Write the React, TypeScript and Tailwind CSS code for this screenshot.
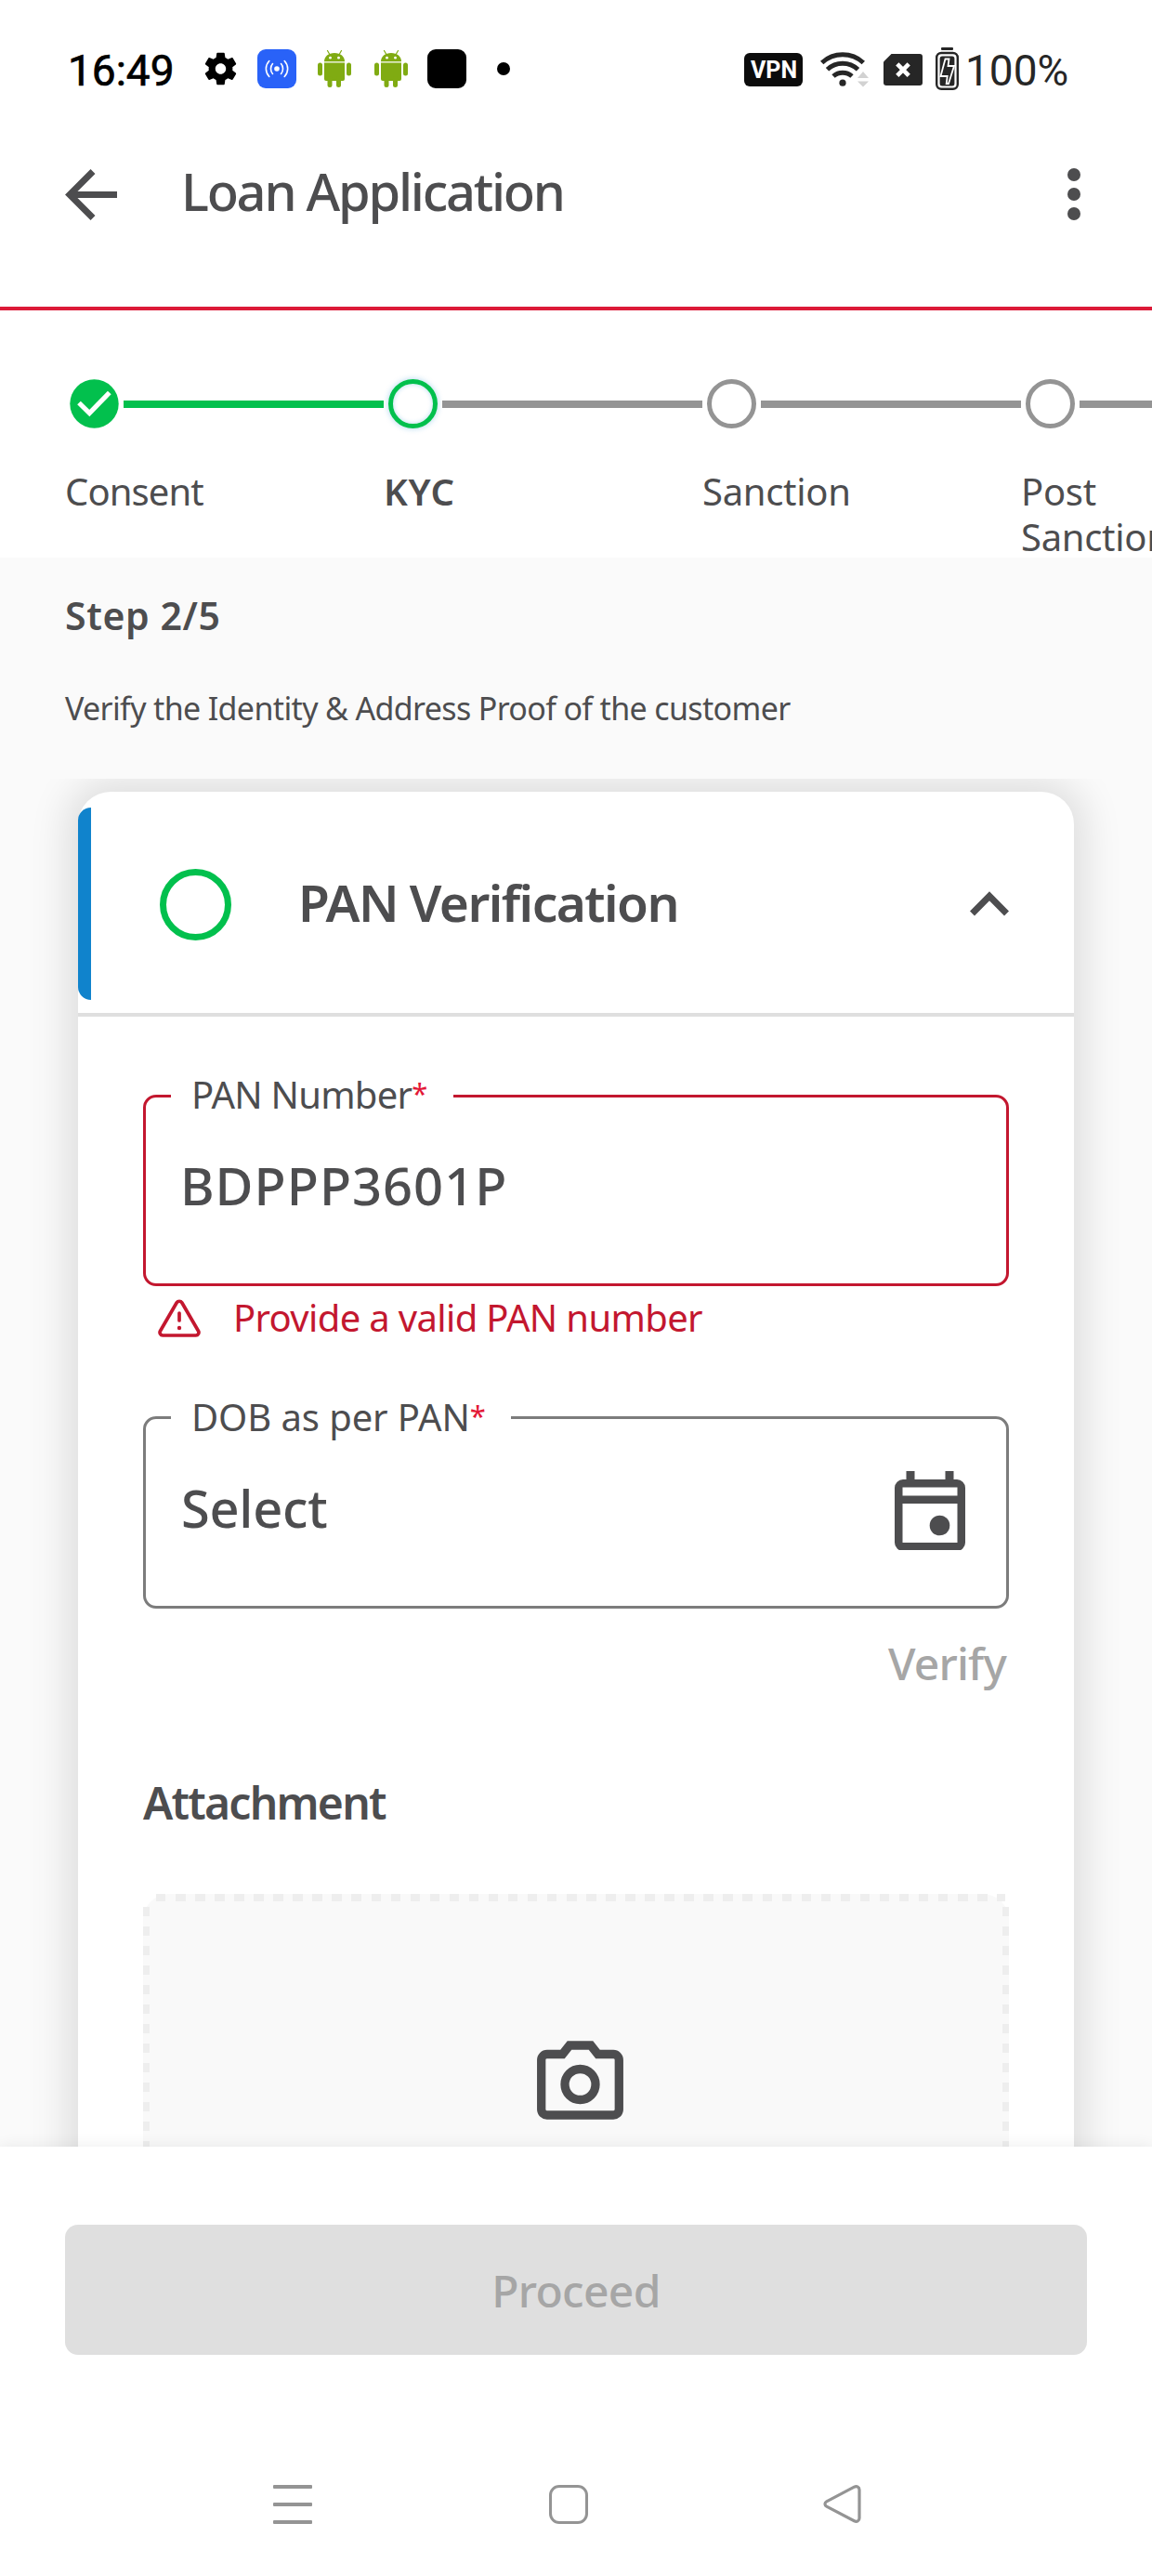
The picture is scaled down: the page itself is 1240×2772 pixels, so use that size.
import type { ReactNode } from "react";

const steps = [
  { label: "Consent", state: "done" },
  { label: "KYC", state: "active" },
  { label: "Sanction", state: "todo" },
  { label: "Post Sanction", state: "todo" },
];

function GearIcon({ className }: { className: string }) {
  return (
    <svg className={className} viewBox="2.2 2 19.6 20" preserveAspectRatio="none" fill="#000">
      <path d="M19.14 12.94c.04-.3.06-.61.06-.94 0-.32-.02-.64-.07-.94l2.03-1.58c.18-.14.23-.41.12-.61l-1.92-3.32c-.12-.22-.37-.29-.59-.22l-2.39.96c-.5-.38-1.03-.7-1.62-.94l-.36-2.54c-.04-.24-.24-.41-.48-.41h-3.84c-.24 0-.43.17-.47.41l-.36 2.54c-.59.24-1.13.57-1.62.94l-2.39-.96c-.22-.08-.47 0-.59.22L2.74 8.87c-.12.21-.08.47.12.61l2.03 1.58c-.05.3-.09.63-.09.94s.02.64.07.94l-2.03 1.58c-.18.14-.23.41-.12.61l1.92 3.32c.12.22.37.29.59.22l2.39-.96c.5.38 1.03.7 1.62.94l.36 2.54c.05.24.24.41.48.41h3.84c.24 0 .44-.17.47-.41l.36-2.54c.59-.24 1.13-.56 1.62-.94l2.39.96c.22.08.47 0 .59-.22l1.92-3.32c.12-.22.07-.47-.12-.61l-2.01-1.58zM12 15.2c-1.76 0-3.2-1.44-3.2-3.2s1.44-3.2 3.2-3.2 3.2 1.44 3.2 3.2-1.44 3.2-3.2 3.2z" />
    </svg>
  );
}

function AndroidIcon({ className }: { className: string }) {
  return (
    <svg className={className} viewBox="0 0 36 40" fill="#80ab12">
      <rect x="0" y="13.5" width="5" height="14" rx="2.5" />
      <rect x="31" y="13.5" width="5" height="14" rx="2.5" />
      <path d="M7 13.5h22v17.5a2 2 0 0 1-2 2H9a2 2 0 0 1-2-2z" />
      <rect x="10.5" y="28" width="5" height="12" rx="2.5" />
      <rect x="20" y="28" width="5" height="12" rx="2.5" />
      <path d="M7 12.2C7 6.800 11.500 3 18 3s11 3.800 11 9.200z" />
      <path d="M10.500 .5l2.600 4.500M25.500 .5l-2.600 4.500" stroke="#80ab12" strokeWidth="1.200" strokeLinecap="round" />
      <circle cx="13.500" cy="8.200" r="1.400" fill="#fff" />
      <circle cx="22.500" cy="8.200" r="1.400" fill="#fff" />
    </svg>
  );
}

function StatusBar() {
  return (
    <div className="flex h-[148px] items-center pl-[73px] font-['Roboto',sans-serif]">
      <div className="w-[147px] pt-[4px] text-[46px] leading-[54px] text-black [-webkit-text-stroke:0.7px_#000]">16:49</div>
      <GearIcon className="h-[36px] w-[35px]" />
      <svg className="ml-[22px] h-[42px] w-[42px]" viewBox="0 0 42 42" fill="none" stroke="#fff" strokeWidth="1.6" strokeLinecap="round">
        <rect width="42" height="42" rx="9" fill="#2962f8" stroke="none" />
        <circle cx="21" cy="21" r="2.800" fill="#fff" stroke="none" />
        <path d="M16.500 15.500c-2.700 3-2.700 8 0 11M25.500 15.500c2.700 3 2.700 8 0 11M12.800 12.500c-4.600 5-4.600 12 0 17M29.200 12.500c4.600 5 4.600 12 0 17" />
      </svg>
      <AndroidIcon className="ml-[23px] h-[40px] w-[36px]" />
      <AndroidIcon className="ml-[25px] h-[40px] w-[36px]" />
      <div className="ml-[21px] size-[42px] rounded-[9px] bg-black" />
      <div className="ml-[33px] size-[14px] rounded-full bg-black" />
      <div className="mt-[2px] ml-[252px] flex h-[36px] w-[63px] items-center justify-center rounded-[6px] bg-[#0c0c0c] pl-px text-[25px] leading-none font-bold text-white">
        VPN
      </div>
      <svg className="ml-[19px] h-[40px] w-[52px]" viewBox="0 0 52 40" fill="none" stroke="#262626" strokeWidth="5">
        <path d="M1.700 13.500a33 33 0 0 1 44.600 0M7.500 20.800a24 24 0 0 1 33 0M14 28a15 15 0 0 1 20 0" />
        <circle cx="24" cy="35.200" r="3.600" fill="#262626" stroke="none" />
        <path d="M46 23l6 7H40zM46 39.500l-6-6h12z" fill="#d2d2d2" stroke="none" />
      </svg>
      <svg className="mt-[2px] ml-[16px] h-[34px] w-[42px]" viewBox="0 0 42 34">
        <path d="M8.500 0H39a3 3 0 0 1 3 3v28a3 3 0 0 1-3 3H3a3 3 0 0 1-3-3V8.500z" fill="#262626" />
        <path d="M14.800 10.800l12.400 12.600M27.200 10.800L14.800 23.400" stroke="#fff" strokeWidth="4.600" />
      </svg>
      <svg className="ml-[14px] h-[46px] w-[25px]" viewBox="0 0 25 46" fill="none">
        <rect x="6" y="0" width="13" height="3" rx="1" fill="#262626" />
        <rect x="1.200" y="6" width="22.600" height="38.800" rx="5" stroke="#262626" strokeWidth="2.400" />
        <rect x="4.600" y="9.500" width="15.800" height="32" rx="2.500" fill="#262626" />
        <path d="M10.500 12.500h4l-1 7.500h6.500l-6 19h-2.300l1-8H5.500z" fill="#262626" stroke="#fff" strokeWidth="1.800" />
      </svg>
      <div className="ml-[7px] pt-[4px] text-[46px] leading-[54px] text-[#262626]">100%</div>
    </div>
  );
}

function Header() {
  return (
    <header className="flex h-[186px] border-b-[4px] border-[#dc1a38] pl-[70px]">
      <svg className="mt-[34px] h-[55px] w-[56px]" viewBox="0 0 56 55" fill="none" stroke="#4d4d4f" strokeWidth="7">
        <path d="M30 2.500L5 27.500L30 52.500M5 27.500H56" />
      </svg>
      <h1 className="mt-[27px] ml-[69px] text-[56px] leading-[60px] font-medium tracking-[-2.25px]">Loan Application</h1>
      <div className="mt-[33px] ml-auto flex flex-col gap-[7px] pr-[77px]">
        <span className="size-[14px] rounded-full bg-[#4d4d4f]" />
        <span className="size-[14px] rounded-full bg-[#4d4d4f]" />
        <span className="size-[14px] rounded-full bg-[#4d4d4f]" />
      </div>
    </header>
  );
}

function StepMark({ state }: { state: string }) {
  if (state === "done") {
    return (
      <svg className="size-[53px] shrink-0" viewBox="0 0 53 53" fill="none">
        <circle cx="26.500" cy="26.500" r="26.200" fill="#02c04d" />
        <path d="M10 25.500L21.300 36.500L42.800 14.500" stroke="#fff" strokeWidth="5.200" />
      </svg>
    );
  }
  return state === "active" ? (
    <span className="size-[53px] shrink-0 rounded-full border-[5px] border-[#02c04d] shadow-[0_0_6px_rgba(16,131,204,0.35),inset_0_0_5px_rgba(16,131,204,0.3)]" />
  ) : (
    <span className="size-[53px] shrink-0 rounded-full border-[5px] border-[#949494]" />
  );
}

function Stepper() {
  return (
    <div className="h-[266px] overflow-hidden pt-[74px] pl-[70px]">
      <div className="flex">
        {steps.map((s) => (
          <div key={s.label} className="w-[343px] shrink-0">
            <div className="flex items-center pl-[5px]">
              <StepMark state={s.state} />
              <span className={s.state === "done" ? "ml-[5px] h-[8px] w-[280px] bg-[#02c04d]" : "ml-[5px] h-[8px] w-[280px] bg-[#949494]"} />
            </div>
            <div
              className={
                s.state === "active"
                  ? "mt-[43px] w-[200px] text-[40px] leading-[49px] font-semibold tracking-[0.6px]"
                  : s.state === "done"
                    ? "mt-[43px] w-[200px] text-[40px] leading-[49px] tracking-[-0.9px]"
                    : "mt-[43px] w-[200px] text-[40px] leading-[49px] tracking-[-0.3px]"
              }
            >
              {s.label}
            </div>
          </div>
        ))}
      </div>
    </div>
  );
}

function Required() {
  return <span className="relative -top-[5px] text-[31px] leading-none tracking-normal text-[#e31837]">*</span>;
}

function Field({ boxClass, label, labelClass, children }: { boxClass: string; label: string; labelClass: string; children: ReactNode }) {
  return (
    <div className={boxClass}>
      <div className={labelClass}>
        {label}
        <Required />
      </div>
      {children}
    </div>
  );
}

function PanCard() {
  return (
    <section className="mx-[84px] h-[1600px] rounded-[35px] bg-white shadow-[0_0_40px_12px_rgba(0,0,0,0.115)]">
      <div className="flex h-[242px] items-center border-b-[4px] border-[#dfdfdf]">
        <span className="mb-[14px] h-[207px] w-[14px] self-end rounded-l-[14px] bg-[#1083cc]" />
        <span className="mt-[5px] ml-[74px] size-[77px] rounded-full border-[7px] border-[#02c04d]" />
        <h2 className="ml-[72px] text-[55px] leading-[60px] font-semibold tracking-[-1.55px]">PAN Verification</h2>
        <svg className="mt-[2px] mr-[70px] ml-auto h-[27px] w-[42px]" viewBox="0 0 42 27" fill="none" stroke="#4d4d4f" strokeWidth="7">
          <path d="M2.500 24L21 5.300L39.500 24" />
        </svg>
      </div>
      <div className="px-[70px] pt-[84px]">
        <Field
          boxClass="relative h-[206px] rounded-[14px] border-[3px] border-[#c3172f] pt-[64px] pl-[37px]"
          label="PAN Number"
          labelClass="absolute -top-[28px] left-[27px] w-[304px] bg-white pl-[22px] text-[40px] leading-[50px] tracking-[-0.75px]"
        >
          <div className="text-[56px] leading-[60px] font-medium tracking-[1px]">BDPPP3601P</div>
        </Field>
        <div className="mt-[9px] flex h-[50px] items-center pl-[16px] text-[#c3172f]">
          <svg className="h-[41px] w-[46px]" viewBox="0 0 46 41" fill="none" stroke="#c3172f" strokeWidth="3.700" strokeLinecap="round" strokeLinejoin="round">
            <path d="M20.200 3.800a3.300 3.300 0 0 1 5.600 0L43.500 34.200a3.200 3.200 0 0 1-2.700 4.800H5.200a3.200 3.200 0 0 1-2.700-4.800z" />
            <path d="M23 15v8" />
            <circle cx="23" cy="31" r="2.200" fill="#c3172f" stroke="none" />
          </svg>
          <span className="ml-[35px] text-[40px] leading-[50px] tracking-[-0.65px]">Provide a valid PAN number</span>
        </div>
        <div className="h-[81px]" />
        <Field
          boxClass="relative flex h-[207px] justify-between rounded-[14px] border-[3px] border-[#7c7c7c] pt-[56px] pr-[44px] pl-[38px]"
          label="DOB as per PAN"
          labelClass="absolute -top-[27px] left-[27px] w-[366px] bg-white pl-[22px] text-[40px] leading-[50px] tracking-[-0.1px]"
        >
          <div className="mt-[9px] text-[56px] leading-[60px] font-medium tracking-[-0.3px]">Select</div>
          <svg className="h-[85px] w-[76px]" viewBox="0 0 76 85" fill="#4d4d4f">
            <path fillRule="evenodd" d="M12.500 0h9v9h33V0h9v9H67a9 9 0 0 1 9 9v59a9 9 0 0 1-9 9H9A9 9 0 0 1 0 77V18a9 9 0 0 1 9-9h3.500zM8.500 17.500v9h59v-9zM8.500 35v42h59V35z" />
            <circle cx="48.500" cy="58.500" r="10.800" />
          </svg>
        </Field>
        <div className="mt-[29px] pr-[3px] text-right text-[48px] leading-[60px] font-medium tracking-[-0.8px] text-[#a6a6a6]">Verify</div>
        <h3 className="mt-[90px] text-[48px] leading-[60px] font-semibold tracking-[-1.75px]">Attachment</h3>
        <div className="relative mt-[68px] h-[340px] rounded-[28px] bg-[#f9f9f9] pt-[158px]">
          <span className="absolute top-0 right-[4px] left-[14px] h-[8px] bg-[repeating-linear-gradient(90deg,#eeeeee_0_10.5px,transparent_10.5px_21.05px)]" />
          <span className="absolute top-[14px] bottom-0 left-0 w-[7px] bg-[repeating-linear-gradient(180deg,#eeeeee_0_10.5px,transparent_10.5px_21px)]" />
          <span className="absolute top-[14px] right-0 bottom-0 w-[7px] bg-[repeating-linear-gradient(180deg,#eeeeee_0_10.5px,transparent_10.5px_21px)]" />
          <svg className="ml-[424px] h-[85px] w-[93px]" viewBox="0 0 93 85" fill="none" stroke="#4d4d4f" strokeWidth="9.300">
            <path d="M11 14.500H27.500L35 5H58L65.500 14.500H82A6.200 6.200 0 0 1 88.300 20.800V74A6.200 6.200 0 0 1 82 80H11A6.200 6.200 0 0 1 4.700 74V20.800A6.200 6.200 0 0 1 11 14.500z" />
            <circle cx="46.500" cy="47" r="16.500" />
          </svg>
        </div>
      </div>
    </section>
  );
}

function BottomSheet() {
  return (
    <footer className="relative h-[462px] bg-white pt-[84px] shadow-[0_0_16px_rgba(0,0,0,0.08)]">
      <button className="mx-[70px] flex h-[140px] w-[1100px] items-center justify-center rounded-[14px] bg-[#dfdfdf] pt-px text-[48px] leading-[60px] font-medium tracking-[-0.7px] text-[#a6a6a6]">
        Proceed
      </button>
      <div className="mt-[140px] flex pl-[294px]">
        <div className="flex h-[42px] w-[42px] flex-col justify-between">
          <span className="h-[4px] rounded-[1px] bg-[#949494]" />
          <span className="h-[4px] rounded-[1px] bg-[#949494]" />
          <span className="h-[4px] rounded-[1px] bg-[#949494]" />
        </div>
        <span className="ml-[255px] size-[42px] rounded-[11px] border-[3px] border-[#949494]" />
        <svg className="ml-[253px] h-[41px] w-[41px]" viewBox="0 0 41 41" fill="none" stroke="#949494" strokeWidth="3.200" strokeLinejoin="round">
          <path d="M33.500 2.200c2.800-1.400 5.500 0 5.500 3v30.600c0 3-2.700 4.400-5.500 3L3.700 23.200c-2.300-1.200-2.300-4.200 0-5.400z" />
        </svg>
      </div>
    </footer>
  );
}

export default function App() {
  return (
    <div className="h-[2772px] w-[1240px] overflow-hidden bg-white font-['Noto_Sans',sans-serif] text-[#4d4d4f]">
      <StatusBar />
      <Header />
      <Stepper />
      <main className="bg-[#fafafa]">
        <div className="h-[238px] px-[70px] pt-[37px]">
          <div className="text-[41px] leading-[50px] font-semibold tracking-[0.6px]">Step 2/5</div>
          <p className="mt-[55px] text-[34px] leading-[40px] tracking-[-0.65px]">Verify the Identity &amp; Address Proof of the customer</p>
        </div>
        <div className="h-[1472px] overflow-hidden pt-[14px]">
          <PanCard />
        </div>
      </main>
      <BottomSheet />
    </div>
  );
}
